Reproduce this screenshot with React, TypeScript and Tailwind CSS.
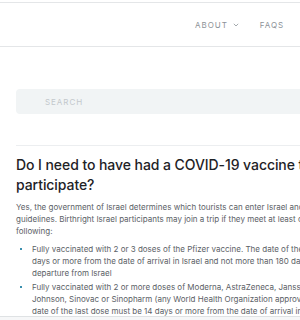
const intro = [
  "Yes, the government of Israel determines which tourists can enter Israel and under what",
  "guidelines. Birthright Israel participants may join a trip if they meet at least one of the",
  "following:",
];

const bullets = [
  [
    "Fully vaccinated with 2 or 3 doses of the Pfizer vaccine. The date of the last dose must be 14",
    "days or more from the date of arrival in Israel and not more than 180 days from the date of",
    "departure from Israel",
  ],
  [
    "Fully vaccinated with 2 or more doses of Moderna, AstraZeneca, Janssen/Johnson &",
    "Johnson, Sinovac or Sinopharm (any World Health Organization approved vaccine). The",
    "date of the last dose must be 14 days or more from the date of arrival in Israel and",
  ],
];

const Chevron = () => (
  <svg width="6" height="4" viewBox="0 0 6 4" className="ml-[5px] mt-[1px]">
    <path d="M0.8 0.8 L3 3 L5.2 0.8" fill="none" stroke="#9aa0a5" strokeWidth="0.9" />
  </svg>
);

const Header = () => {
  return (
    <div className="mt-[2px] h-[45px] w-[420px] border-t border-b border-[#e4e6e8] flex items-center pl-[195px] gap-[21px] text-[8px] tracking-[0.12em] text-[#8d9297]">
      <div className="flex items-center">
        <span>ABOUT</span>
        <Chevron />
      </div>
      <span>FAQS</span>
      <span>LOG IN</span>
    </div>
  );
};

export default function App() {
  return (
    <div
      className="w-[300px] h-[320px] overflow-hidden bg-white relative"
      style={{ fontFamily: "Inter, 'Noto Sans', sans-serif" }}
    >
      <Header />
      <div className="px-4 w-[460px]">
        <div className="mt-[42px] h-[25px] rounded-[4px] bg-[#f1f4f5] flex items-center pl-[29px]">
          <span className="text-[8px] tracking-[0.12em] text-[#c3c8cc]">SEARCH</span>
        </div>
        <div className="mt-[31px] border-t border-[#eceef0]" />
        <h2 className="mt-[9px] text-[14px] leading-[20px] font-medium tracking-[-0.005em] text-[#1e2226] whitespace-nowrap">
          Do I need to have had a COVID-19 vaccine to
          <br />
          participate?
        </h2>
        <div className="mt-[6px] text-[8px] leading-[12px] text-[#5b6166] whitespace-nowrap">
          {intro.map((line, i) => (
            <div key={i}>{line}</div>
          ))}
          <ul className="mt-[6px] flex flex-col gap-[2px]">
            {bullets.map((item, i) => (
              <li key={i} className="flex">
                <div className="w-[16px] flex pl-[4px] pt-[5px]">
                  <div className="w-[2px] h-[2px] bg-[#3a8fae]" />
                </div>
                <div>
                  {item.map((line, j) => (
                    <div key={j}>{line}</div>
                  ))}
                </div>
              </li>
            ))}
          </ul>
        </div>
      </div>
      <div className="absolute left-0 right-0 bottom-0 h-[4px] border-t border-[#dfe2e4] bg-[#f6f7f8]" />
    </div>
  );
}
